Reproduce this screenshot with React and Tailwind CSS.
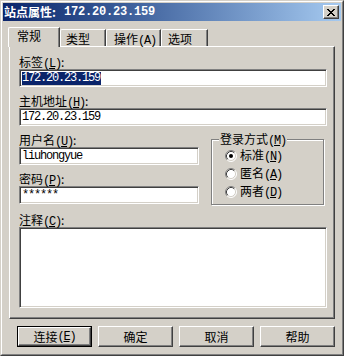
const mono = "font-['Liberation_Mono',monospace] tracking-[-1.2px]";

function Acc({ k }) {
  return (
    <span className={mono}>
      (<u className="underline-offset-1">{k}</u>)
    </span>
  );
}

function Radio({ checked }) {
  return (
    <svg width="12" height="12" viewBox="0 0 12 12" className="shrink-0">
      <circle cx="6" cy="6" r="5" fill="white" />
      <path d="M2.11 9.89 A5.5 5.5 0 0 1 9.89 2.11" fill="none" stroke="#808080" />
      <path d="M9.89 2.11 A5.5 5.5 0 0 1 2.11 9.89" fill="none" stroke="white" />
      <path d="M2.82 9.18 A4.5 4.5 0 0 1 9.18 2.82" fill="none" stroke="#404040" />
      <path d="M9.18 2.82 A4.5 4.5 0 0 1 2.82 9.18" fill="none" stroke="#d4d0c8" />
      {checked && <circle cx="6" cy="6" r="2" fill="black" />}
    </svg>
  );
}

function Field({ label, children, className = '' }) {
  return (
    <div className={className}>
      <div className="h-[15px] leading-[15px]">{label}</div>
      {children}
    </div>
  );
}

function Input({ children, className = 'w-full' }) {
  return (
    <div className={`${className} h-[18px] bg-white border border-t-[#808080] border-l-[#808080] border-r-white border-b-white shadow-[inset_1px_1px_0_#404040,inset_-1px_-1px_0_#d4d0c8] pl-[2px] leading-[16px] ${mono}`}>
      {children}
    </div>
  );
}

function Button({ children, isDefault }) {
  const inner = (
    <div className="h-full flex items-center justify-center border border-t-white border-l-white border-r-[#404040] border-b-[#404040] shadow-[inset_-1px_-1px_0_#808080]">
      {children}
    </div>
  );
  return isDefault ? (
    <div className="w-[75px] h-[21px] border border-black">{inner}</div>
  ) : (
    <div className="w-[75px] h-[21px]">{inner}</div>
  );
}

const tabs = [
  { name: '类型', w: 'w-[46px]', pl: 'pl-[5px]' },
  { name: '操作', acc: 'A', w: 'w-[55px]', pl: 'pl-[7px]' },
  { name: '选项', w: 'w-[47px]', pl: 'pl-[6px]' },
];

export default function App() {
  return (
    <div className="w-[344px] h-[356px] bg-[#d4d0c8] border border-t-[#d4d0c8] border-l-[#d4d0c8] border-r-[#404040] border-b-[#404040] font-['Noto_Sans_CJK_SC',sans-serif] text-[12px] text-black">
      <div className="h-full border border-t-white border-l-white border-r-[#808080] border-b-[#808080] p-px">
        {/* title bar */}
        <div className="h-[18px] flex items-center bg-linear-to-r from-[#0a246a] to-[#a6caf0] pl-[1px] pr-[2px]">
          <span className="text-white font-bold leading-[18px]">站点属性:</span>
          <span className="text-white font-bold font-['Liberation_Mono',monospace] tracking-[-0.2px] leading-[18px] ml-[8px]">172.20.23.159</span>
          <div className="ml-auto w-[16px] h-[14px] bg-[#d4d0c8] border border-t-white border-l-white border-r-[#404040] border-b-[#404040] shadow-[inset_-1px_-1px_0_#808080] flex items-center justify-center">
            <svg width="8" height="7" viewBox="0 0 8 7">
              <path d="M0.5 0 L7.5 7 M1.5 0 L8.5 7 M7.5 0 L0.5 7 M8.5 0 L1.5 7" stroke="black" strokeWidth="1" transform="translate(-0.5 0)" />
            </svg>
          </div>
        </div>

        {/* tabs */}
        <div className="flex items-end h-[19px] ml-[5px] mt-[6px]">
          <div className="relative z-10 w-[52px] h-[20px] -mb-px bg-[#d4d0c8] border-t border-l border-t-white border-l-white border-r border-r-[#404040] shadow-[inset_-1px_0_0_#808080] rounded-tl-[2px] pl-[8px] leading-[16px]">
            常规
          </div>
          {tabs.map((t) => (
            <div
              key={t.name}
              className={`${t.w} ${t.pl} h-[17px] border-t border-l border-t-white border-l-white border-r border-r-[#404040] shadow-[inset_-1px_0_0_#808080] rounded-tl-[2px] leading-[17px]`}
            >
              {t.name}
              {t.acc && <span className={mono}>({t.acc})</span>}
            </div>
          ))}
        </div>

        {/* panel */}
        <div className="ml-[6px] w-[326px] h-[273px] border border-t-white border-l-white border-r-[#404040] border-b-[#404040] shadow-[inset_-1px_-1px_0_#808080] pl-[9px] pr-[7px] pt-[7px]">
          <Field label={<>标签<Acc k="L" />:</>} className="mb-[6px]">
            <Input>
              <span className="bg-[#0a246a] text-white inline-block leading-[13px] pr-[1px]">172.20.23.159</span>
            </Input>
          </Field>
          <Field label={<>主机地址<Acc k="H" />:</>} className="mb-[6px]">
            <Input>172.20.23.159</Input>
          </Field>

          <div className="flex">
            <div className="w-[180px]">
              <Field label={<>用户名<Acc k="U" />:</>} className="mb-[6px]">
                <Input>liuhongyue</Input>
              </Field>
              <Field label={<>密码<Acc k="P" />:</>}>
                <Input>******</Input>
              </Field>
            </div>
            <div className="relative ml-[12px] mt-[7px] w-[113px] h-[66px] border border-[#808080] shadow-[inset_1px_1px_0_white,1px_1px_0_white] pl-[13px] pt-[7px]">
              <div className="absolute -top-[7px] left-[7px] bg-[#d4d0c8] px-[1px] leading-[12px]">
                登录方式<Acc k="M" />
              </div>
              {[
                ['标准', 'N', true],
                ['匿名', 'A', false],
                ['两者', 'D', false],
              ].map(([n, k, c]) => (
                <div key={n} className="h-[18px] flex items-center gap-[3px]">
                  <Radio checked={c} />
                  <span className="leading-[14px]">
                    {n}
                    <Acc k={k} />
                  </span>
                </div>
              ))}
            </div>
          </div>

          <Field label={<>注释<Acc k="C" />:</>} className="mt-[7px]">
            <Input className="w-full !h-[81px]"></Input>
          </Field>
        </div>

        {/* buttons */}
        <div className="flex gap-[6px] pl-[14px] mt-[7px]">
          <Button isDefault>
            连接<Acc k="E" />
          </Button>
          <Button>确定</Button>
          <Button>取消</Button>
          <Button>帮助</Button>
        </div>
      </div>
    </div>
  );
}
